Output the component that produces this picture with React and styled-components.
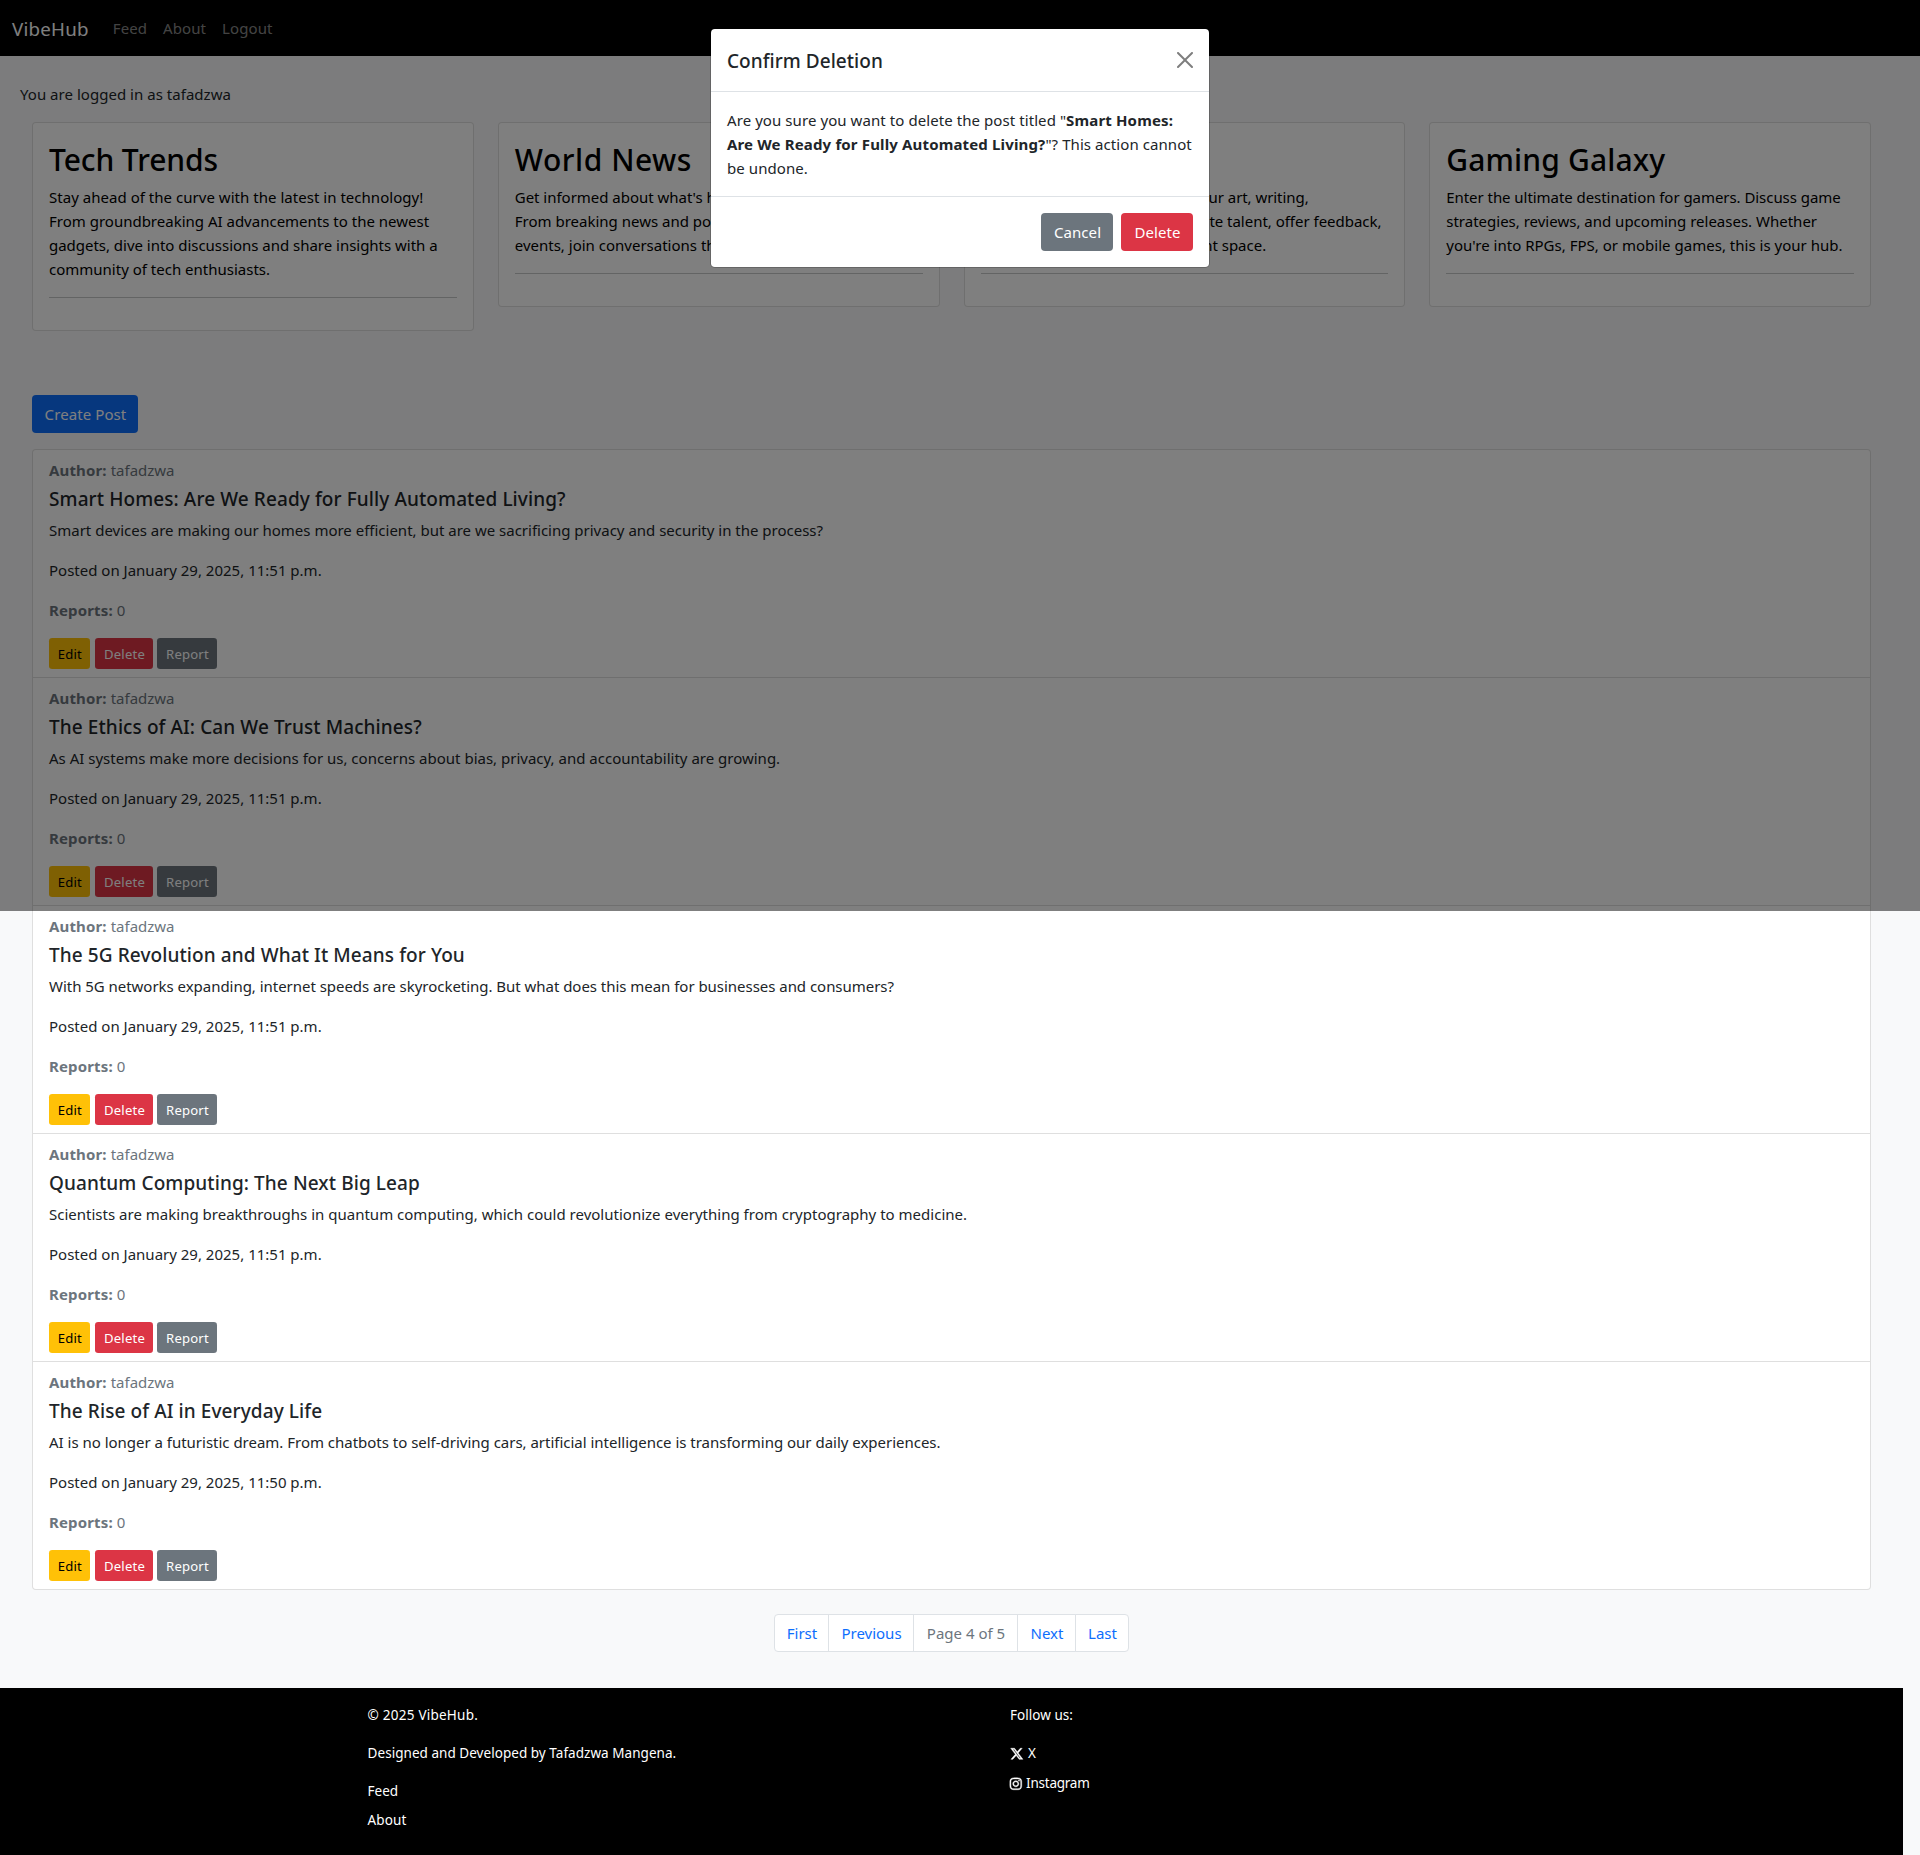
import React from "react";
import styled, { createGlobalStyle } from "styled-components";
import { FaInstagram, FaXTwitter } from "react-icons/fa6";

const GlobalStyle = createGlobalStyle`
  *, *::before, *::after { box-sizing: border-box; }
  html { background: #f8f9fa; }
  body {
    margin: 0;
    position: relative;
    background: #f8f9fa;
    color: #212529;
    font-family: "Noto Sans", "Open Sans", sans-serif;
    font-size: 15px;
    line-height: 24px;
  }
  h2, h5, p, ul { margin: 0; padding: 0; }
  ul { list-style: none; }
  a { color: inherit; text-decoration: none; }
  strong { font-weight: 700; letter-spacing: 0.01em; }
  button { font-family: inherit; cursor: pointer; }
`;

const NavBar = styled.nav`
  display: flex;
  align-items: center;
  height: 56px;
  padding: 0 12px;
  background: #000;
`;

const Brand = styled.a`
  margin-right: 16px;
  padding-top: 1px;
  color: #fff;
  font-size: 18.75px;
  line-height: 30px;
  letter-spacing: 0.012em;
`;

const NavLink = styled.a`
  padding: 8px;
  color: rgba(255, 255, 255, 0.55);
  letter-spacing: 0.006em;
`;

const Main = styled.main`
  width: 1903px;
  padding: 26px 20px 36px;
`;

const Status = styled.p`
  margin-bottom: 16px;
  letter-spacing: 0.002em;
`;

const CategoryRow = styled.section`
  display: grid;
  grid-template-columns: repeat(4, 1fr);
  align-items: start;
  gap: 24px;
  padding: 0 12px;
`;

const CategoryCard = styled.article`
  padding: 16px;
  border: 1px solid rgba(0, 0, 0, 0.125);
  border-radius: 4px;
  background: #fff;
  color: #000;
`;

const CategoryTitle = styled.h2`
  margin-bottom: 6px;
  padding-top: 2px;
  font-size: 30px;
  font-weight: 500;
  line-height: 38.4px;
  letter-spacing: ${(p) => p.$track || 0}em;
`;

const TextLine = styled.span`
  display: block;
  white-space: nowrap;
  letter-spacing: ${(p) => p.$track || 0}em;
`;

const Divider = styled.hr`
  height: 1px;
  margin: 16px 0;
  border: 0;
  background: #212529;
  opacity: 0.25;
`;

const Feed = styled.section`
  padding: 64px 12px 0;
`;

const palette = {
  primary: { bg: "#0d6efd", fg: "#fff" },
  warning: { bg: "#ffc107", fg: "#000" },
  danger: { bg: "#dc3545", fg: "#fff" },
  secondary: { bg: "#6c757d", fg: "#fff" },
};

const Button = styled.button`
  display: inline-flex;
  align-items: center;
  justify-content: center;
  width: ${(p) => p.$width};
  height: 38px;
  padding: 0 0 0 1px;
  border: 0;
  border-radius: 4px;
  background: ${(p) => palette[p.$tone].bg};
  color: ${(p) => palette[p.$tone].fg};
  font-size: 15px;
  line-height: 24px;
  letter-spacing: 0.006em;
`;

const SmallButton = styled(Button)`
  height: 31px;
  padding: 1px 0 0 1px;
  border-radius: 3.2px;
  font-size: 13.125px;
  line-height: 21px;
  letter-spacing: 0.014em;
`;

const PostList = styled.ul`
  margin-top: 16px;
  border: 1px solid rgba(0, 0, 0, 0.125);
  border-radius: 4px;
  background: #fff;
`;

const PostItem = styled.li`
  padding: 8px 16px;
  & + & {
    border-top: 1px solid rgba(0, 0, 0, 0.125);
  }
`;

const Meta = styled.p`
  margin-bottom: ${(p) => p.$gap}px;
  color: #6c757d;
`;

const PostTitle = styled.h5`
  margin-bottom: 7px;
  font-size: 19px;
  font-weight: 500;
  line-height: 24px;
  letter-spacing: 0.005em;
`;

const PostText = styled.p`
  margin-bottom: 16px;
  letter-spacing: ${(p) => p.$track || 0}em;
`;

const Actions = styled.div`
  display: flex;
  gap: 4px;
  & > :first-child {
    margin-right: 1.4px;
  }
`;

const Pagination = styled.ul`
  display: flex;
  justify-content: center;
  margin-top: 24px;
`;

const PageItem = styled.li`
  display: flex;
  align-items: center;
  justify-content: center;
  width: ${(p) => p.$width}px;
  height: 38px;
  padding-left: 1px;
  border: 1px solid #dee2e6;
  background: #fff;
  color: ${(p) => (p.$current ? "#6c757d" : "#0d6efd")};
  &:not(:first-child) { margin-left: -1px; }
  &:first-child { border-radius: 4px 0 0 4px; }
  &:last-child { border-radius: 0 4px 4px 0; }
`;

const Footer = styled.footer`
  display: grid;
  grid-template-columns: 642.4px 1fr;
  width: 1903px;
  height: 167px;
  padding: 17px 0 0 367.6px;
  background: #000;
  color: #fff;
  font-size: 13.5px;
  line-height: 21.6px;
`;

const FooterText = styled.p`
  margin-bottom: 16px;
  letter-spacing: ${(p) => p.$track || 0.003}em;
`;

const FooterLink = styled.li`
  display: flex;
  align-items: center;
  gap: ${(p) => p.$gap || 0}px;
  height: 21.6px;
  margin-bottom: 8px;
  letter-spacing: ${(p) => p.$track || 0}em;
  svg {
    margin-left: ${(p) => p.$shift || 0}px;
    stroke: currentColor;
    stroke-width: 16px;
    overflow: visible;
  }
`;

const Backdrop = styled.div`
  position: absolute;
  inset: 0 0 auto 0;
  height: 911px;
  padding-top: 28px;
  background: rgba(0, 0, 0, 0.5);
`;

const Dialog = styled.div`
  width: 500px;
  margin: 0 auto;
  border: 1px solid rgba(0, 0, 0, 0.2);
  border-radius: 4.8px;
  background: #fff;
  background-clip: padding-box;
`;

const DialogHeader = styled.header`
  display: flex;
  align-items: center;
  justify-content: space-between;
  padding: 17px 16px 15px;
  border-bottom: 1px solid #dee2e6;
`;

const DialogTitle = styled.h5`
  font-size: 19px;
  font-weight: 500;
  line-height: 30px;
  letter-spacing: 0.002em;
`;

const CloseButton = styled.button`
  display: flex;
  width: 16px;
  height: 16px;
  margin-top: -2px;
  padding: 0;
  border: 0;
  background: none;
  opacity: 0.5;
`;

const DialogBody = styled.div`
  padding: 16px;
`;

const DialogFooter = styled.footer`
  display: flex;
  justify-content: flex-end;
  gap: 8px;
  padding: 16px;
  border-top: 1px solid #dee2e6;
`;

const categories = [
  {
    title: "Tech Trends",
    track: -0.003,
    lines: [
      ["Stay ahead of the curve with the latest in technology!", 0.002],
      ["From groundbreaking AI advancements to the newest", 0],
      ["gadgets, dive into discussions and share insights with a", -0.0016],
      ["community of tech enthusiasts.", 0],
    ],
  },
  {
    title: "World News",
    track: 0.018,
    lines: [
      ["Get informed about what's happening globally.", -0.0015],
      ["From breaking news and politics to major world", 0],
      ["events, join conversations that matter most.", 0],
    ],
  },
  {
    title: "Creative Hub",
    track: 0,
    lines: [
      ["Unleash your creativity! Share your art, writing,", -0.004],
      ["music, or photography. Appreciate talent, offer feedback,", -0.0015],
      ["and find inspiration in this vibrant space.", -0.001],
    ],
  },
  {
    title: "Gaming Galaxy",
    track: 0.005,
    lines: [
      ["Enter the ultimate destination for gamers. Discuss game", -0.0035],
      ["strategies, reviews, and upcoming releases. Whether", 0],
      ["you're into RPGs, FPS, or mobile games, this is your hub.", 0.001],
    ],
  },
];

const posts = [
  {
    title: "Smart Homes: Are We Ready for Fully Automated Living?",
    text: "Smart devices are making our homes more efficient, but are we sacrificing privacy and security in the process?",
    track: -0.0003,
    time: "11:51",
  },
  {
    title: "The Ethics of AI: Can We Trust Machines?",
    text: "As AI systems make more decisions for us, concerns about bias, privacy, and accountability are growing.",
    time: "11:51",
  },
  {
    title: "The 5G Revolution and What It Means for You",
    text: "With 5G networks expanding, internet speeds are skyrocketing. But what does this mean for businesses and consumers?",
    track: -0.0022,
    time: "11:51",
  },
  {
    title: "Quantum Computing: The Next Big Leap",
    text: "Scientists are making breakthroughs in quantum computing, which could revolutionize everything from cryptography to medicine.",
    track: 0.0005,
    time: "11:51",
  },
  {
    title: "The Rise of AI in Everyday Life",
    text: "AI is no longer a futuristic dream. From chatbots to self-driving cars, artificial intelligence is transforming our daily experiences.",
    track: -0.001,
    time: "11:50",
  },
];

const pages = [
  ["First", 55],
  ["Previous", 86],
  ["Page 4 of 5", 105],
  ["Next", 59],
  ["Last", 54],
];

function Post({ post }) {
  return (
    <PostItem>
      <Meta $gap={5}>
        <strong>Author:</strong> tafadzwa
      </Meta>
      <PostTitle>{post.title}</PostTitle>
      <PostText $track={post.track}>{post.text}</PostText>
      <PostText>Posted on January 29, 2025, {post.time} p.m.</PostText>
      <Meta $gap={16}>
        <strong>Reports:</strong> 0
      </Meta>
      <Actions>
        <SmallButton $tone="warning" $width="40.6px">Edit</SmallButton>
        <SmallButton $tone="danger" $width="58px">Delete</SmallButton>
        <SmallButton $tone="secondary" $width="60px">Report</SmallButton>
      </Actions>
    </PostItem>
  );
}

function DeleteDialog() {
  return (
    <Backdrop>
      <Dialog role="dialog" aria-modal="true">
        <DialogHeader>
          <DialogTitle>Confirm Deletion</DialogTitle>
          <CloseButton aria-label="Close">
            <svg width="16" height="16" viewBox="0 0 16 16" fill="#000">
              <path d="M.293.293a1 1 0 011.414 0L8 6.586 14.293.293a1 1 0 111.414 1.414L9.414 8l6.293 6.293a1 1 0 01-1.414 1.414L8 9.414l-6.293 6.293a1 1 0 01-1.414-1.414L6.586 8 .293 1.707a1 1 0 010-1.414z" />
            </svg>
          </CloseButton>
        </DialogHeader>
        <DialogBody>
          <TextLine $track={0.005}>
            Are you sure you want to delete the post titled "<strong>Smart Homes:</strong>
          </TextLine>
          <TextLine $track={0.005}>
            <strong>Are We Ready for Fully Automated Living?</strong>"? This action cannot
          </TextLine>
          <TextLine $track={0.005}>be undone.</TextLine>
        </DialogBody>
        <DialogFooter>
          <Button $tone="secondary" $width="72px">Cancel</Button>
          <Button $tone="danger" $width="72px">Delete</Button>
        </DialogFooter>
      </Dialog>
    </Backdrop>
  );
}

export default function App() {
  return (
    <>
      <GlobalStyle />
      <NavBar>
        <Brand href="#">VibeHub</Brand>
        <NavLink href="#">Feed</NavLink>
        <NavLink href="#">About</NavLink>
        <NavLink href="#">Logout</NavLink>
      </NavBar>
      <Main>
        <Status>You are logged in as tafadzwa</Status>
        <CategoryRow>
          {categories.map((c) => (
            <CategoryCard key={c.title}>
              <CategoryTitle $track={c.track}>{c.title}</CategoryTitle>
              <p>
                {c.lines.map(([line, track]) => (
                  <TextLine key={line} $track={track}>{line}</TextLine>
                ))}
              </p>
              <Divider />
            </CategoryCard>
          ))}
        </CategoryRow>
        <Feed>
          <Button $tone="primary" $width="106px">Create Post</Button>
          <PostList>
            {posts.map((post) => (
              <Post key={post.title} post={post} />
            ))}
          </PostList>
          <Pagination>
            {pages.map(([label, width]) => (
              <PageItem key={label} $width={width} $current={label.startsWith("Page")}>
                {label}
              </PageItem>
            ))}
          </Pagination>
        </Feed>
      </Main>
      <Footer>
        <div>
          <FooterText $track={0.0177}>© 2025 VibeHub.</FooterText>
          <FooterText>Designed and Developed by Tafadzwa Mangena.</FooterText>
          <ul>
            <FooterLink><a href="#">Feed</a></FooterLink>
            <FooterLink $track={0.01}><a href="#">About</a></FooterLink>
          </ul>
        </div>
        <div>
          <FooterText>Follow us:</FooterText>
          <ul>
            <FooterLink $gap={4.4}><FaXTwitter size={13.6} /><a href="#">X</a></FooterLink>
            <FooterLink $gap={3.5} $shift={-1} $track={-0.0176}><FaInstagram size={13.6} /><a href="#">Instagram</a></FooterLink>
          </ul>
        </div>
      </Footer>
      <DeleteDialog />
    </>
  );
}
